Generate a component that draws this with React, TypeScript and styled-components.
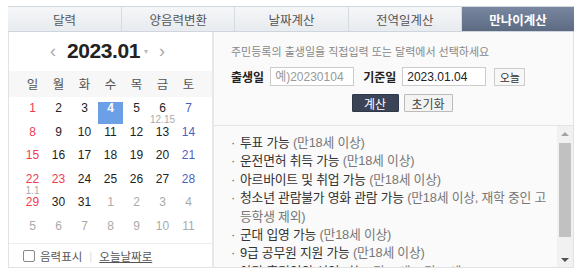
import styled, { createGlobalStyle } from "styled-components";

const GlobalStyle = createGlobalStyle`
  body {
    margin: 0;
    background: #fff;
    font-family: "Liberation Sans", "Noto Sans CJK KR", sans-serif;
  }
`;

const tabs = ["달력", "양음력변환", "날짜계산", "전역일계산", "만나이계산"];
const weekDays = ["일", "월", "화", "수", "목", "금", "토"];

type Tone = "sun" | "sat" | "day" | "other";

interface DayData {
    n: number;
    tone: Tone;
    lunar?: string;
    selected?: boolean;
}

function buildDays(): DayData[] {
    const days: DayData[] = [];
    for (let d = 1; d <= 31; d++) {
        const col = (d - 1) % 7;
        let tone: Tone = col === 0 ? "sun" : col === 6 ? "sat" : "day";
        if (d === 23) tone = "sun";
        days.push({
            n: d,
            tone,
            lunar: d === 6 ? "12.15" : d === 22 ? "1.1" : undefined,
            selected: d === 4,
        });
    }
    for (let d = 1; d <= 11; d++) days.push({ n: d, tone: "other" });
    return days;
}

const results = [
    { main: "투표 가능", sub: "(만18세 이상)" },
    { main: "운전면허 취득 가능", sub: "(만18세 이상)" },
    { main: "아르바이트 및 취업 가능", sub: "(만18세 이상)" },
    { main: "청소년 관람불가 영화 관람 가능", sub: "(만18세 이상, 재학 중인 고등학생 제외)" },
    { main: "군대 입영 가능", sub: "(만18세 이상)" },
    { main: "9급 공무원 지원 가능", sub: "(만18세 이상)" },
    { main: "야간 후견인의 선임 가능", sub: "(만19세 ~ 만29세)" },
    { main: "혼인 가능", sub: "(만18세 이상)" },
];

function App() {
    const days = buildDays();
    return (
        <Page>
            <GlobalStyle />
            <TabBar>
                {tabs.map((t, i) => (
                    <Tab key={t} active={i === tabs.length - 1}>
                        {t}
                    </Tab>
                ))}
            </TabBar>
            <Body>
                <Calendar>
                    <MonthHeader>
                        <Arrow>‹</Arrow>
                        <MonthTitle>2023.01</MonthTitle>
                        <Caret>▾</Caret>
                        <Arrow>›</Arrow>
                    </MonthHeader>
                    <WeekRow>
                        {weekDays.map((w) => (
                            <WeekCell key={w}>{w}</WeekCell>
                        ))}
                    </WeekRow>
                    <DateGrid>
                        {days.map((d, i) => (
                            <DateCell key={i} selected={!!d.selected}>
                                <DateNum tone={d.tone} selected={!!d.selected}>
                                    {d.n}
                                </DateNum>
                                {d.lunar && <Lunar>{d.lunar}</Lunar>}
                            </DateCell>
                        ))}
                    </DateGrid>
                    <CalFooter>
                        <CheckBox />
                        <span>음력표시</span>
                        <Divider>|</Divider>
                        <TodayLink>오늘날짜로</TodayLink>
                    </CalFooter>
                </Calendar>
                <Gutter />
                <Calc>
                    <Form>
                        <Hint>주민등록의 출생일을 직접입력 또는 달력에서 선택하세요</Hint>
                        <FieldRow>
                            <Label>출생일</Label>
                            <Input placeholder="예)20230104" />
                            <Label>기준일</Label>
                            <Input defaultValue="2023.01.04" />
                            <SmallButton>오늘</SmallButton>
                        </FieldRow>
                        <ButtonRow>
                            <Button primary>계산</Button>
                            <Button>초기화</Button>
                        </ButtonRow>
                    </Form>
                    <ResultArea>
                        <ResultList>
                            {results.map((r) => (
                                <ResultItem key={r.main}>
                                    <Bullet>·</Bullet>
                                    <ItemText>
                                        {r.main} <Sub>{r.sub}</Sub>
                                    </ItemText>
                                </ResultItem>
                            ))}
                        </ResultList>
                        <ScrollTrack>
                            <ScrollArrow up />
                            <ScrollThumb />
                            <ScrollSpacer />
                            <ScrollArrow />
                        </ScrollTrack>
                    </ResultArea>
                </Calc>
            </Body>
        </Page>
    );
}

const Page = styled.div`
    padding: 6px 8px 0;
    width: 566px;
`;

const TabBar = styled.div`
    display: grid;
    grid-template-columns: repeat(5, 1fr);
    border-top: 1px solid #d3d8de;
    border-bottom: 1px solid #cfd5dc;
    height: 24px;
`;

const Tab = styled.div<{ active: boolean }>`
    display: flex;
    align-items: center;
    justify-content: center;
    font-size: 12.5px;
    color: ${(p) => (p.active ? "#fff" : "#555")};
    font-weight: ${(p) => (p.active ? 700 : 400)};
    background: ${(p) =>
        p.active
            ? "linear-gradient(#7886a0, #5c6a82)"
            : "linear-gradient(#f4f6f8, #e8ebef)"};
    border-left: 1px solid #d6dbe1;
    &:first-child {
        border-left: none;
    }
`;

const Body = styled.div`
    display: flex;
    height: 236px;
`;

const Calendar = styled.div`
    width: 203px;
    border-left: 1px solid #e2e2e2;
    border-bottom: 1px solid #e2e2e2;
    background: #fff;
    display: flex;
    flex-direction: column;
`;

const MonthHeader = styled.div`
    height: 39px;
    display: flex;
    align-items: center;
    justify-content: center;
    gap: 6px;
    padding-right: 6px;
`;

const Arrow = styled.span`
    font-size: 18px;
    color: #aaa;
    margin: 0 5px;
    line-height: 1;
`;

const MonthTitle = styled.span`
    font-size: 21px;
    font-weight: 700;
    color: #222;
    letter-spacing: -0.4px;
`;

const Caret = styled.span`
    font-size: 8px;
    color: #bbb;
    margin-left: -2px;
`;

const WeekRow = styled.div`
    height: 26px;
    background: #f7f7f7;
    display: grid;
    grid-template-columns: repeat(7, 26px);
    justify-content: center;
    align-items: center;
`;

const WeekCell = styled.span`
    text-align: center;
    font-size: 12.5px;
    color: #555;
`;

const DateGrid = styled.div`
    display: grid;
    grid-template-columns: repeat(7, 26px);
    grid-auto-rows: 23.5px;
    justify-content: center;
    padding-top: 5.5px;
    flex: 1;
`;

const toneColor: Record<Tone, string> = {
    sun: "#f03c50",
    sat: "#4f5fc0",
    day: "#222",
    other: "#aaa",
};

const DateCell = styled.div<{ selected: boolean }>`
    display: flex;
    flex-direction: column;
    align-items: center;
    width: 25px;
    height: 22px;
    justify-self: center;
    background: ${(p) => (p.selected ? "#6b9fe6" : "transparent")};
`;

const DateNum = styled.span<{ tone: Tone; selected: boolean }>`
    font-size: 12px;
    line-height: 13px;
    color: ${(p) => (p.selected ? "#fff" : toneColor[p.tone])};
    font-weight: ${(p) => (p.selected ? 700 : 400)};
`;

const Lunar = styled.span`
    font-size: 10px;
    line-height: 10px;
    color: #aaa;
`;

const CalFooter = styled.div`
    height: 23px;
    border-top: 1px solid #eee;
    display: flex;
    align-items: center;
    padding-left: 14px;
    font-size: 11.5px;
    color: #555;
    gap: 4px;
`;

const CheckBox = styled.span`
    width: 10px;
    height: 10px;
    border: 1px solid #888;
    border-radius: 2px;
    margin-right: 1px;
`;

const Divider = styled.span`
    color: #ddd;
    margin: 0 3px;
`;

const TodayLink = styled.span`
    text-decoration: underline;
`;

const Gutter = styled.div`
    width: 2px;
    background: #e8e8e8;
`;

const Calc = styled.div`
    flex: 1;
    background: #fafafa;
    border-right: 1px solid #e2e2e2;
    border-bottom: 1px solid #e2e2e2;
    display: flex;
    flex-direction: column;
`;

const Form = styled.div`
    height: 94px;
    border-bottom: 1px solid #e4e4e4;
    padding: 12px 0 0 17px;
    box-sizing: border-box;
`;

const Hint = styled.div`
    font-size: 11px;
    line-height: 16px;
    color: #888;
`;

const FieldRow = styled.div`
    display: flex;
    align-items: center;
    margin-top: 7px;
    height: 19px;
`;

const Label = styled.span`
    font-size: 12px;
    font-weight: 700;
    color: #222;
    margin-right: 6px;
`;

const Input = styled.input`
    width: 84px;
    height: 19px;
    box-sizing: border-box;
    border: 1px solid #ccc;
    background: #fff;
    padding: 0 4px;
    font-family: "Liberation Sans", "Noto Sans CJK KR", sans-serif;
    font-size: 12px;
    color: #222;
    margin-right: 9px;
    &::placeholder {
        color: #999;
    }
`;

const SmallButton = styled.button`
    width: 31px;
    height: 18px;
    border: 1px solid #ccc;
    background: #f7f7f7;
    font-family: inherit;
    font-size: 11px;
    color: #333;
    padding: 0;
    margin-left: -1px;
`;

const ButtonRow = styled.div`
    display: flex;
    justify-content: center;
    gap: 5px;
    margin-top: 8px;
`;

const Button = styled.button<{ primary?: boolean }>`
    height: 18px;
    width: ${(p) => (p.primary ? "47px" : "49px")};
    padding: 0;
    font-family: inherit;
    font-size: 12px;
    border: 1px solid ${(p) => (p.primary ? "#2f3748" : "#bbb")};
    background: ${(p) => (p.primary ? "#3b4357" : "#f4f4f4")};
    color: ${(p) => (p.primary ? "#fff" : "#444")};
    border-radius: 1px;
`;

const ResultArea = styled.div`
    flex: 1;
    display: flex;
    min-height: 0;
`;

const ResultList = styled.ul`
    flex: 1;
    list-style: none;
    margin: 0;
    padding: 8px 1px 0 17px;
    overflow: hidden;
`;

const ResultItem = styled.li`
    display: flex;
    font-size: 12.8px;
    letter-spacing: -0.2px;
    line-height: 18.4px;
    color: #333;
`;

const Bullet = styled.span`
    width: 9px;
    flex-shrink: 0;
    color: #666;
`;

const ItemText = styled.span`
    word-break: break-all;
`;

const Sub = styled.span`
    color: #777;
`;

const ScrollTrack = styled.div`
    width: 16px;
    background: #f1f1f1;
    display: flex;
    flex-direction: column;
`;

const ScrollArrow = styled.div<{ up?: boolean }>`
    height: 15px;
    display: flex;
    align-items: center;
    justify-content: center;
    &::after {
        content: "";
        border-left: 4px solid transparent;
        border-right: 4px solid transparent;
        ${(p) =>
            p.up
                ? "border-bottom: 4px solid #a3a3a3;"
                : "border-top: 4px solid #505050;"}
    }
`;

const ScrollThumb = styled.div`
    height: 94px;
    margin: 2px 2px 0;
    background: #c1c1c1;
`;

const ScrollSpacer = styled.div`
    flex: 1;
`;

export default App;
